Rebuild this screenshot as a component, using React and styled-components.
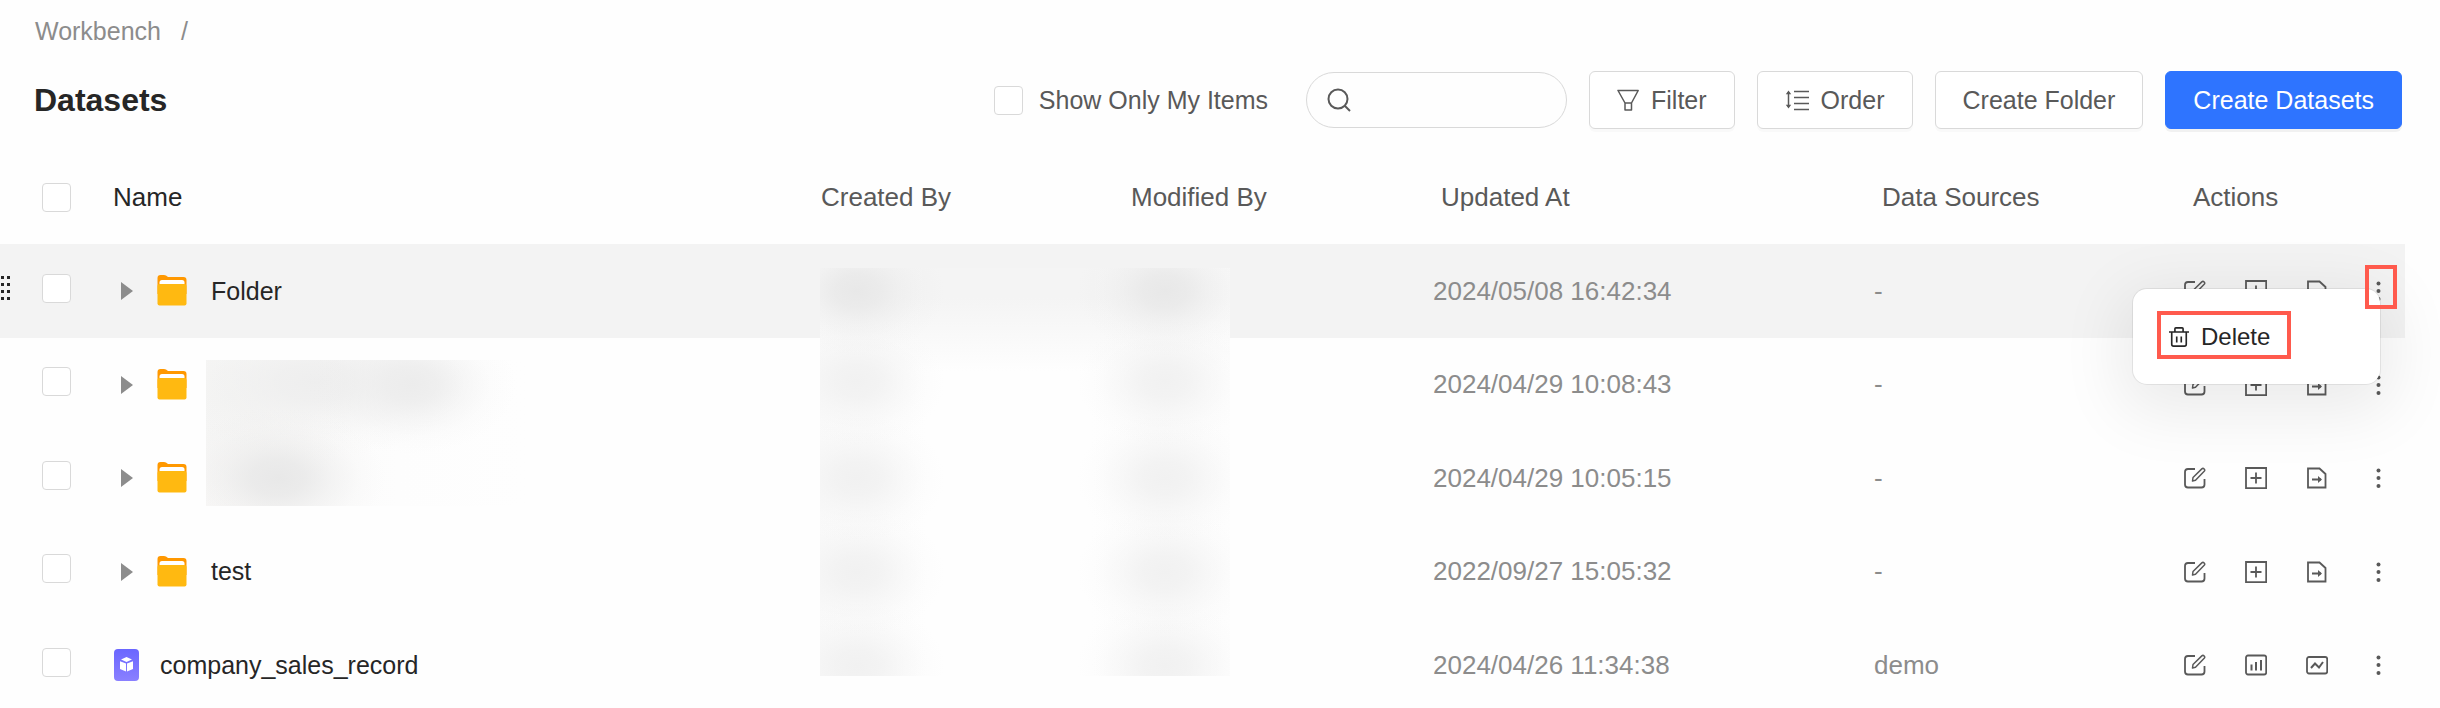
import * as React from "react";
import styled, { createGlobalStyle, css } from "styled-components";

const GlobalStyle = createGlobalStyle`
  * {
    box-sizing: border-box;
  }
  body {
    margin: 0;
    background: #fefefe;
    color: #262626;
    font-family: "Liberation Sans", Arial, sans-serif;
    font-size: 25px;
  }
  button, input {
    font: inherit;
    color: inherit;
  }
`;

const Page = styled.main`
  min-height: 100vh;
  padding-right: 35px;
  overflow: hidden;
`;

const Breadcrumb = styled.nav`
  display: flex;
  gap: 20px;
  padding: 16px 0 0 35px;
  line-height: 30px;
  color: #8c8c8c;
  a {
    color: inherit;
    text-decoration: none;
  }
`;

const Toolbar = styled.header`
  display: flex;
  align-items: center;
  gap: 22px;
  height: 58px;
  margin: 25px 3px 0 34px;
`;

const Title = styled.h1`
  margin: 0 auto 0 0;
  font-size: 32px;
  line-height: 40px;
`;

const Check = styled.input.attrs({ type: "checkbox" })`
  appearance: none;
  display: block;
  flex: none;
  width: 29px;
  height: 29px;
  margin: 0;
  border: 1px solid #d9d9d9;
  border-radius: 4px;
  background: #fff;
  &:checked {
    background: #2e74ff;
    border-color: #2e74ff;
  }
`;

const CheckLabel = styled.label`
  display: flex;
  align-items: center;
  gap: 16px;
  margin-right: 16px;
  color: #595959;
`;

const Search = styled.label`
  display: flex;
  align-items: center;
  gap: 12px;
  width: 261px;
  height: 56px;
  padding: 0 20px;
  border: 1px solid #d9d9d9;
  border-radius: 28px;
  color: #595959;
  input {
    flex: 1;
    min-width: 0;
    border: 0;
    outline: 0;
    background: none;
  }
`;

const Button = styled.button`
  display: flex;
  align-items: center;
  gap: 12px;
  height: 58px;
  padding: 0 27px;
  border: 1px solid #d9d9d9;
  border-radius: 6px;
  background: #fff;
  color: #595959;
  white-space: nowrap;
  box-shadow: 0 3px 0 rgba(0, 0, 0, 0.02);
  ${(props) => props.$primary && css`
    border-color: #2e74ff;
    background: #2e74ff;
    color: #fff;
    box-shadow: 0 3px 0 rgba(0, 0, 0, 0.05);
  `}
`;

const TableWrap = styled.div`
  position: relative;
  margin-top: 23px;
`;

const Table = styled.table`
  width: 100%;
  table-layout: fixed;
  border-collapse: collapse;
`;

const Col = styled.col`
  width: ${(props) => props.$w ? `${props.$w}px` : "auto"};
`;

const Th = styled.th`
  height: 92px;
  padding: 0 0 2px 9px;
  font-size: 26px;
  font-weight: 400;
  text-align: left;
  color: #595959;
`;

const NameTh = styled(Th)`
  padding-left: 1px;
  color: #262626;
`;

const Td = styled.td`
  height: 94px;
  padding: 0 0 0 1px;
  font-size: 26px;
  color: #8c8c8c;
`;

const Row = styled.tr`
  background: ${(props) => props.$active ? "#f3f3f3" : "none"};
  &:nth-child(even) ${Td} {
    height: 93px;
  }
`;

const SelectTh = styled(Th)`
  padding: 0 0 2px 42px;
`;

const SelectTd = styled(Td)`
  padding: 0 0 6px;
`;

const SelectInner = styled.div`
  display: flex;
  align-items: center;
`;

const Handle = styled.div`
  width: 42px;
  height: 24px;
  svg {
    display: block;
  }
`;

const Name = styled.div`
  display: flex;
  align-items: center;
  gap: ${(props) => props.$folder ? "24px" : "21px"};
  padding-left: ${(props) => props.$folder ? "8px" : "1px"};
  font-size: 25px;
  color: #262626;
  svg {
    flex: none;
  }
`;

const Toggle = styled.button`
  display: flex;
  padding: 0;
  border: 0;
  background: none;
`;

const ActionsTd = styled(Td)`
  position: relative;
  padding: 0;
`;

const Actions = styled.div`
  display: flex;
  gap: 39px;
`;

const IconButton = styled.button`
  display: flex;
  flex: none;
  padding: 0;
  border: 0;
  background: none;
  color: #595959;
`;

const Menu = styled.div`
  position: absolute;
  top: 45px;
  right: 25px;
  z-index: 2;
  width: 247px;
  padding: 22px 24px 25px;
  border-radius: 14px;
  background: #fff;
  box-shadow: 0 0 0 1px rgba(0, 0, 0, 0.07), 0 16px 64px 12px rgba(0, 0, 0, 0.08);
`;

const MenuItem = styled.button`
  display: flex;
  align-items: center;
  gap: 12px;
  width: 134px;
  height: 48px;
  padding: 3px 8px 0;
  border: 4px solid #ff5a4d;
  background: none;
  color: #262626;
  font-size: 24px;
`;

const Marker = styled.span`
  position: absolute;
  top: 21px;
  right: 8px;
  z-index: 3;
  width: 32px;
  height: 44px;
  border: 4px solid #ff5a4d;
  pointer-events: none;
`;

const Veil = styled.div`
  position: absolute;
  pointer-events: none;
`;

// soft round smudge that fades out without a visible rim
const smudge = (x, y, rx, ry, rgb, a = 1) =>
  `radial-gradient(ellipse ${rx}px ${ry}px at ${x}px ${y}px, rgba(${rgb}, ${a}), rgba(${rgb}, ${a * 0.82}) 25%, rgba(${rgb}, ${a * 0.42}) 50%, rgba(${rgb}, ${a * 0.12}) 75%, rgba(${rgb}, 0))`;

const NameVeil = styled(Veil)`
  top: 208px;
  left: 206px;
  width: 320px;
  height: 146px;
  background:
    ${smudge(72, 118, 108, 70, "232, 232, 232")},
    ${smudge(206, 24, 104, 70, "236, 236, 236")},
    ${smudge(110, 22, 150, 76, "238, 238, 238")},
    ${smudge(20, 40, 130, 120, "244, 244, 243")},
    linear-gradient(90deg, #f9f8f7, #fdfdfd 60%, #fefefe);
`;

const spots = [23, 113, 210, 304, 398]
  .flatMap((y, i) => [37, 345].map((x) => (
    smudge(x, y, 88, 64, i ? "241, 241, 241" : "232, 232, 232")
  )))
  .join(",");

const PeopleVeil = styled(Veil)`
  top: 116px;
  right: 1175px;
  width: 410px;
  height: 408px;
  background: ${spots},
    linear-gradient(90deg, rgba(249, 249, 249, 0.8), rgba(249, 249, 249, 0.6) 12%, rgba(254, 254, 254, 0) 26%, rgba(254, 254, 254, 0) 66%, rgba(249, 249, 249, 0.7) 84%, rgba(252, 252, 252, 0.4)),
    linear-gradient(#f4f4f4 30px, #f8f8f8 60px, #fefefe 104px);
`;

const Icon = ({ size = 22, stroke = 1.8, children }) => (
  <svg
    width={size}
    height={size}
    viewBox="0 0 22 22"
    fill="none"
    stroke="currentColor"
    strokeWidth={stroke}
    aria-hidden="true"
  >
    {children}
  </svg>
);

const SearchIcon = () => (
  <svg width="24" height="24" viewBox="0 0 24 24" fill="none" stroke="currentColor" strokeWidth="2" aria-hidden="true">
    <circle cx="11" cy="11" r="9.5" />
    <path d="M17.500 17.500l5.500 5.500" />
  </svg>
);

const FilterIcon = () => (
  <Icon stroke={1.5}>
    <path d="M1 1.500h20.200L14.500 14v7h-6.500v-7zM8 14h6.500" strokeLinejoin="round" />
  </Icon>
);

const OrderIcon = () => (
  <svg width="24" height="22" viewBox="0 0 24 22" fill="none" stroke="currentColor" strokeWidth="1.5" aria-hidden="true">
    <path d="M3.500 3v15M9 2.500h15M9 8.500h15M9 14.500h15M9 20.500h15" />
    <path d="M.8 5.200l2.700-3.700 2.700 3.700zM.8 15.800l2.700 3.700 2.700-3.700z" fill="currentColor" stroke="none" />
  </svg>
);

const EditIcon = () => (
  <Icon>
    <path d="M11 2H4a3 3 0 0 0-3 3v12.500a3 3 0 0 0 3 3h13.500a3 3 0 0 0 3-3V12" />
    <path d="M8.500 14l.5-3.500 8.800-8.600a1.700 1.700 0 0 1 2.400 2.400L11.500 13.300z" strokeWidth="1.5" strokeLinejoin="round" />
  </Icon>
);

const AddIcon = () => (
  <Icon>
    <path d="M1 1h20.200v20.200H1zM11 5.500v11M5.500 11h11" />
  </Icon>
);

const MoveIcon = () => (
  <Icon>
    <path d="M2 1.500h11.500l6 5.500v13.500H2zM6 12.500h9" />
    <path d="M12 9l4 3.500-4 3.500z" fill="currentColor" stroke="none" />
  </Icon>
);

const BarsIcon = () => (
  <Icon>
    <rect x="1" y="1.500" width="20.200" height="19" rx="2" />
    <path d="M6.500 10.500v6M11 8v8.500M16 6v10.500" strokeWidth="2" />
  </Icon>
);

const TrendIcon = () => (
  <Icon>
    <rect x="1" y="3" width="20.200" height="16.500" rx="2" />
    <path d="M5 14l4-4.500 4 4L17 8" strokeWidth="2" />
  </Icon>
);

const MoreIcon = () => (
  <Icon>
    <g fill="currentColor" stroke="none">
      <circle cx="11.500" cy="3.500" r="2" />
      <circle cx="11.500" cy="11" r="2" />
      <circle cx="11.500" cy="19" r="2" />
    </g>
  </Icon>
);

const TrashIcon = () => (
  <Icon size={20}>
    <path d="M0 5.500h22M6.500 5V2a1 1 0 0 1 1-1h7a1 1 0 0 1 1 1v3M3 5.500V19a2 2 0 0 0 2 2h12a2 2 0 0 0 2-2V5.500M8.500 10.500v6.500M13.500 10.500v6.500" />
  </Icon>
);

const ArrowIcon = () => (
  <svg width="12" height="18" viewBox="0 0 12 18" aria-hidden="true">
    <path d="M0 0l12 9-12 9z" fill="#8c8c8c" />
  </svg>
);

const FolderIcon = () => (
  <svg width="30" height="32" viewBox="0 0 30 32" aria-hidden="true">
    <path d="M.5 3Q.5 0 3.500 0h3.500q2 0 4 2h15.500q3 0 3 3v14H.5z" fill="#ff9800" />
    <path d="M2.500 11V7.500q0-2.500 2.500-2.500h20q2.500 0 2.500 2.500V11z" fill="#fff" />
    <rect x=".5" y="9" width="29" height="21.500" rx="2" fill="#ffb911" />
  </svg>
);

const DatasetIcon = () => (
  <svg width="25" height="32" viewBox="0 0 25 32" aria-hidden="true">
    <defs>
      <linearGradient id="dataset" x1="0" y1="0" x2="0" y2="1">
        <stop offset="0" stopColor="#6a66ff" />
        <stop offset="1" stopColor="#8a80ff" />
      </linearGradient>
    </defs>
    <rect width="25" height="32" rx="4" fill="url(#dataset)" />
    <path d="M12.500 8l5.500 2.500-5.500 2.500-5.500-2.500zM6 12.300l6 2.200v8L6 20zM19 12.300l-6 2.200v8L19 20z" fill="#fff" />
  </svg>
);

const DragIcon = () => (
  <svg width="10" height="24" viewBox="0 0 10 24" fill="#262626" aria-hidden="true">
    {[0, 7, 14, 21].map((y) => (
      <path key={y} d={`M1 ${y}h3v3h-3zM7 ${y}h3v3h-3z`} />
    ))}
  </svg>
);

const FOLDER_ACTIONS = [
  { label: "Edit", Glyph: EditIcon },
  { label: "Add", Glyph: AddIcon },
  { label: "Move", Glyph: MoveIcon },
  { label: "More", Glyph: MoreIcon },
];

const DATASET_ACTIONS = [
  { label: "Edit", Glyph: EditIcon },
  { label: "Dashboard", Glyph: BarsIcon },
  { label: "Analysis", Glyph: TrendIcon },
  { label: "More", Glyph: MoreIcon },
];

const ROWS = [
  { id: 1, folder: true, name: "Folder", updated: "2024/05/08 16:42:34", source: "-", active: true },
  { id: 2, folder: true, name: "", updated: "2024/04/29 10:08:43", source: "-" },
  { id: 3, folder: true, name: "", updated: "2024/04/29 10:05:15", source: "-" },
  { id: 4, folder: true, name: "test", updated: "2022/09/27 15:05:32", source: "-" },
  { id: 5, folder: false, name: "company_sales_record", updated: "2024/04/26 11:34:38", source: "demo" },
];

const DatasetRow = ({ row }) => {
  const actions = row.folder ? FOLDER_ACTIONS : DATASET_ACTIONS;
  return (
    <Row $active={row.active}>
      <SelectTd>
        <SelectInner>
          <Handle>{row.active && <DragIcon />}</Handle>
          <Check aria-label={`Select ${row.name || "folder"}`} />
        </SelectInner>
      </SelectTd>
      <Td>
        <Name $folder={row.folder}>
          {row.folder && (
            <Toggle aria-label="Expand">
              <ArrowIcon />
            </Toggle>
          )}
          {row.folder ? <FolderIcon /> : <DatasetIcon />}
          <span>{row.name}</span>
        </Name>
      </Td>
      <Td />
      <Td />
      <Td>{row.updated}</Td>
      <Td>{row.source}</Td>
      <ActionsTd>
        <Actions>
          {actions.map(({ label, Glyph }) => (
            <IconButton key={label} aria-label={label}>
              <Glyph />
            </IconButton>
          ))}
        </Actions>
        {row.active && (
          <>
            <Menu>
              <MenuItem>
                <TrashIcon />
                Delete
              </MenuItem>
            </Menu>
            <Marker />
          </>
        )}
      </ActionsTd>
    </Row>
  );
};

export default function App() {
  return (
    <Page>
      <GlobalStyle />
      <Breadcrumb>
        <a href="#workbench">Workbench</a>
        <span>/</span>
      </Breadcrumb>
      <Toolbar>
        <Title>Datasets</Title>
        <CheckLabel>
          <Check />
          Show Only My Items
        </CheckLabel>
        <Search>
          <SearchIcon />
          <input type="text" aria-label="Search" />
        </Search>
        <Button>
          <FilterIcon />
          Filter
        </Button>
        <Button>
          <OrderIcon />
          Order
        </Button>
        <Button>Create Folder</Button>
        <Button $primary>Create Datasets</Button>
      </Toolbar>
      <TableWrap>
        <Table>
          <colgroup>
            <Col $w={112} />
            <Col />
            <Col $w={310} />
            <Col $w={310} />
            <Col $w={441} />
            <Col $w={311} />
            <Col $w={221} />
          </colgroup>
          <thead>
            <tr>
              <SelectTh>
                <Check aria-label="Select all" />
              </SelectTh>
              <NameTh>Name</NameTh>
              <Th>Created By</Th>
              <Th>Modified By</Th>
              <Th>Updated At</Th>
              <Th>Data Sources</Th>
              <Th>Actions</Th>
            </tr>
          </thead>
          <tbody>
            {ROWS.map((row) => (
              <DatasetRow key={row.id} row={row} />
            ))}
          </tbody>
        </Table>
        <NameVeil />
        <PeopleVeil />
      </TableWrap>
    </Page>
  );
}
